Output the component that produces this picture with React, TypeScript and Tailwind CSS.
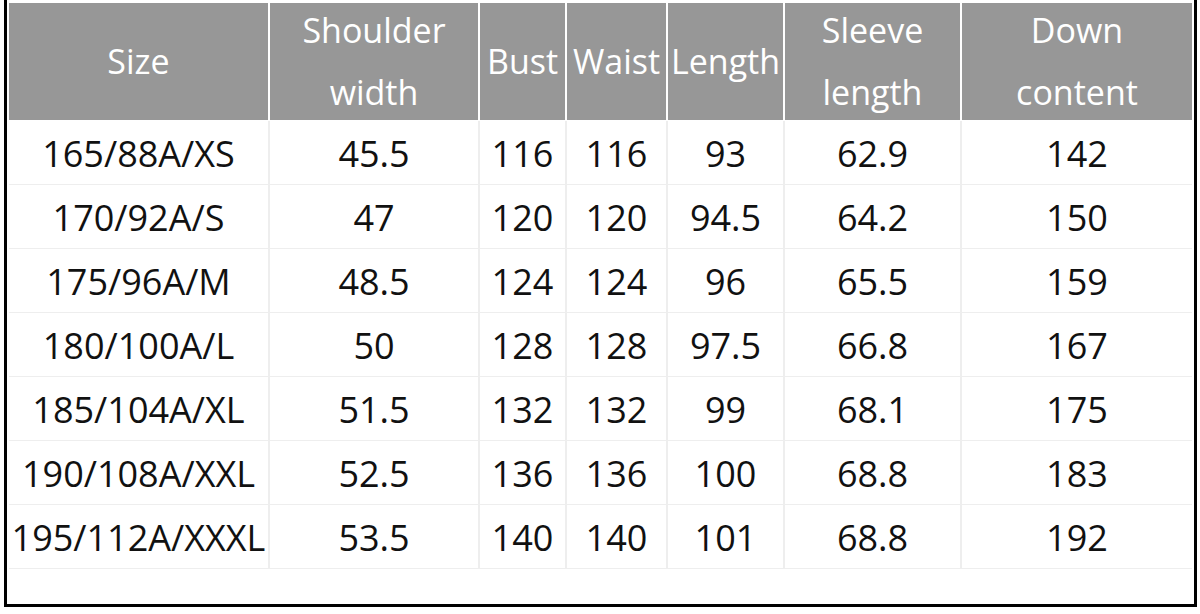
import React from "react";

const cols = "grid-cols-[259px_208px_85px_99px_115px_175px_230px]";

const headers: string[][] = [
  ["Size"],
  ["Shoulder", "width"],
  ["Bust"],
  ["Waist"],
  ["Length"],
  ["Sleeve", "length"],
  ["Down", "content"],
];

const rows: string[][] = [
  ["165/88A/XS", "45.5", "116", "116", "93", "62.9", "142"],
  ["170/92A/S", "47", "120", "120", "94.5", "64.2", "150"],
  ["175/96A/M", "48.5", "124", "124", "96", "65.5", "159"],
  ["180/100A/L", "50", "128", "128", "97.5", "66.8", "167"],
  ["185/104A/XL", "51.5", "132", "132", "99", "68.1", "175"],
  ["190/108A/XXL", "52.5", "136", "136", "100", "68.8", "183"],
  ["195/112A/XXXL", "53.5", "140", "140", "101", "68.8", "192"],
];

export default function App() {
  return (
    <div
      className="w-[1200px] h-[614px] bg-white overflow-hidden"
      style={{ fontFamily: '"Open Sans", "Noto Sans", sans-serif' }}
    >
      <div className="ml-[4px] w-[1193px] h-[607px] border-l-[3px] border-r-[3px] border-b-[3px] border-black pl-[2px] pt-[3px] flex flex-col">
        <div className={`grid ${cols} grid-rows-[117px] gap-x-[2px] bg-white h-[117px] shrink-0`}>
          {headers.map((h, i) => (
            <div
              key={i}
              className="bg-[#979797] text-white text-[34px] leading-[62px] flex flex-col items-center justify-center whitespace-nowrap overflow-hidden min-h-0 pb-[2px]"
            >
              {h.map((l, j) => (
                <span key={j} className="shrink-0">{l}</span>
              ))}
            </div>
          ))}
        </div>
        <div className={`mt-[1px] grid ${cols} gap-x-[2px] gap-y-[1px] bg-[#eeeeee] w-[1183px] pb-[1px]`}>
          {rows.flatMap((r, ri) =>
            r.map((c, ci) => (
              <div
                key={`${ri}-${ci}`}
                className="bg-white h-[63px] flex items-center justify-center text-[36px] text-[#111111] whitespace-nowrap pt-[2px]"
              >
                {c}
              </div>
            ))
          )}
        </div>
      </div>
    </div>
  );
}
